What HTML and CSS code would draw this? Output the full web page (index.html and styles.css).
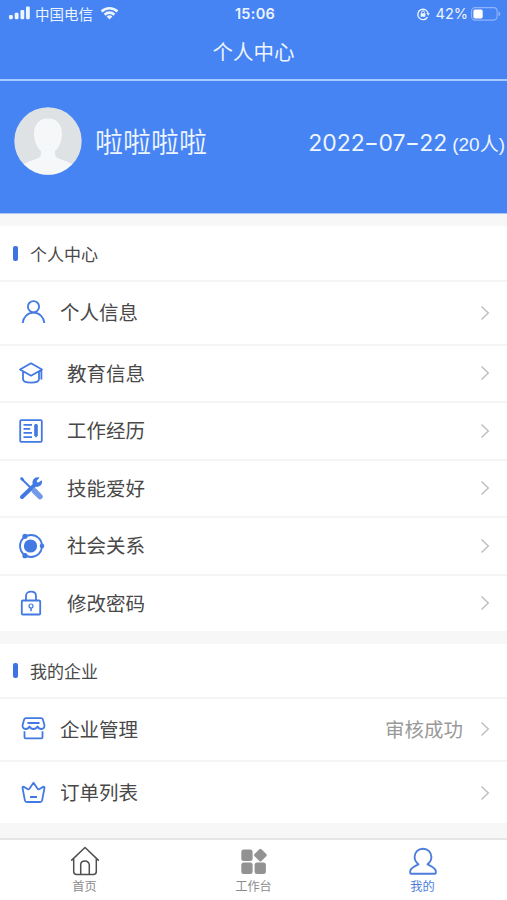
FILE: index.html
```html
<!DOCTYPE html>
<html lang="zh-CN">
<head>
<meta charset="utf-8">
<meta name="viewport" content="width=device-width, initial-scale=1">
<title>个人中心</title>
<link rel="stylesheet" href="styles.css">
</head>
<body>
<svg width="0" height="0" class="defs" aria-hidden="true">
  <symbol id="chevron" viewBox="0 0 10 16"><path d="M1.5 1.5 8.3 8l-6.8 6.5"/></symbol>
</svg>
<header class="top">
  <div class="status">
    <div class="status-left">
      <svg class="signal" viewBox="0 0 22 14" fill="currentColor"><rect y="9" width="4" height="4.500" rx="1.200"/><rect x="6" y="6.800" width="4" height="6.700" rx="1.200"/><rect x="12" y="3.800" width="4" height="9.700" rx="1.200"/><rect x="17.800" y=".3" width="4" height="13.200" rx="1.200"/></svg>
      <span>中国电信</span>
      <svg class="wifi" viewBox="0 0 20 15" fill="none" stroke="currentColor" stroke-width="2.900"><path d="M1.500 5.800a12.400 12.400 0 0 1 17 0M4.800 9.300a7.500 7.500 0 0 1 10.400 0"/><path d="M6.900 11.200a4.700 4.700 0 0 1 6.200 0L10 14.500z" fill="currentColor" stroke="none"/></svg>
    </div>
    <div class="clock">15:06</div>
    <div class="status-right">
      <svg class="rotation" viewBox="0 0 14 14" fill="none" stroke="currentColor" stroke-width="1.400"><path d="M11.500 10.100A5.200 5.200 0 1 1 12.200 7"/><path d="m10.300 6.300 3.500-.1-1.600 2.500z" fill="currentColor" stroke="none"/><rect x="4.600" y="6.200" width="4.800" height="3.600" rx=".6" fill="currentColor" stroke="none"/><path d="M5.600 6.500V5.300a1.400 1.400 0 0 1 2.800 0v1.200" stroke-width="1"/></svg>
      <span>42%</span>
      <svg class="battery" viewBox="0 0 30 14"><rect x=".6" y=".6" width="25.500" height="12.500" rx="3.500" fill="none" stroke="#8fb4fa" stroke-width="1.100"/><rect x="2.400" y="2.400" width="9.300" height="9" rx="1.600" fill="#fff"/><path d="M27.500 4.500c2.400.8 2.400 4 0 4.800z" fill="#8fb4fa"/></svg>
    </div>
  </div>
  <h1>个人中心</h1>
</header>
<section class="profile">
  <svg class="avatar" viewBox="0 0 68 68"><defs><clipPath id="disc"><circle cx="34" cy="34" r="33.700"/></clipPath></defs><g clip-path="url(#disc)"><path fill="#dfe2e4" d="M0 0h68v68H0z"/><path fill="#f5f7f9" d="M34 11.500c8.500 0 14 6 14 15 0 8-2.800 13.500-7 17.500-.5 5 1 6.500 5 8 5.500 2 10 3.500 13 6V68H9V58c3-2.500 7.500-4 13-6 4-1.500 5.500-3 5-8-4.200-4-7-9.500-7-17.500 0-9 5.500-15 14-15z"/></g></svg>
  <div class="name">啦啦啦啦</div>
  <div class="expiry"><span class="date">2022<span class="dash">-</span>07<span class="dash">-</span>22</span><span class="people">(20人)</span></div>
</section>
<main>
  <section class="group">
    <h2>个人中心</h2>
    <a class="row wide"><svg class="icon" viewBox="0 0 24 24"><circle cx="11.500" cy="5.700" r="5.600"/><path d="M.7 22C1.300 16 5.500 11.700 11.500 11.700S21.700 16 22.300 22"/></svg><span>个人信息</span><svg class="chevron"><use href="#chevron"/></svg></a>
    <a class="row"><svg class="icon" viewBox="0 0 24 24"><path d="M1 8.500 12 2.300l11 6.200-11 6.200zM4 11v7c0 2.500 3.500 3.700 8 3.700s8-1.200 8-3.700v-7M22.400 9v9.500"/></svg><span>教育信息</span><svg class="chevron"><use href="#chevron"/></svg></a>
    <a class="row"><svg class="icon" viewBox="0 0 24 24"><rect x="1.200" y="1.200" width="21.600" height="21.600" rx="1"/><path d="M4.500 5.800H13M4.500 9.800h6.700M4.500 13.800H13M4.500 18.200h8.500"/><path d="M15.200 6.500c0-2 3.600-2 3.600 0v9.800L17 18.800l-1.800-2.500z" fill="currentColor" stroke="none"/></svg><span>工作经历</span><svg class="chevron"><use href="#chevron"/></svg></a>
    <a class="row"><svg class="icon" viewBox="0 0 24 24"><path d="M3 21 16.500 8.200" stroke-width="4" stroke-linecap="round"/><path d="M20.500 1.500 17.600 5l1.300 1.700 3.900-2.400c.8 2.700-.5 6-3.900 6.400-1.700.4-3-.2-4.100-1.200-1.500-1.500-1.800-3.500-.8-5.300 1-2.300 3.600-3.600 6.500-2.700z" fill="currentColor" stroke="none"/><path d="m2.500 2.700 11.200 11" stroke-width="1.900"/><path d="m1.300 1.800 2-.7 2 2.700-1.500 1.500L1.300 3.600z" fill="currentColor" stroke="none"/><path d="m15.500 15 5.500 5.600" stroke="#7199ea" stroke-width="5.500" stroke-linecap="round"/></svg><span>技能爱好</span><svg class="chevron"><use href="#chevron"/></svg></a>
    <a class="row"><svg class="icon" viewBox="0 0 24 24"><circle cx="12" cy="12" r="11"/><circle cx="11.500" cy="12" r="6.600" fill="currentColor" stroke="none"/><g fill="currentColor" stroke="none"><circle cx="6" cy="2.300" r="2.600"/><circle cx="23" cy="12" r="2.300"/><circle cx="6" cy="21.700" r="2.600"/></g></svg><span>社会关系</span><svg class="chevron"><use href="#chevron"/></svg></a>
    <a class="row"><svg class="icon" viewBox="0 0 24 24"><rect x="2.800" y="9.500" width="18.400" height="14" rx="1"/><path d="M7 9.500V5c0-2.500 1.800-4.300 5-4.300S17 2.500 17 5v4.500"/><circle cx="12" cy="15" r="2" stroke-width="1.200"/><path d="M12 17v3.300" stroke-width="1.500"/></svg><span>修改密码</span><svg class="chevron"><use href="#chevron"/></svg></a>
  </section>
  <section class="group company">
    <h2>我的企业</h2>
    <a class="row wide"><svg class="icon" viewBox="0 0 24 24"><path d="M3.800 1.200h15.400c.8 0 1.300.4 1.600 1.100L22.400 8c.4 2.300-1 4-3 4-1.900 0-3.200-1-3.900-2.500-.8 1.500-2.200 2.500-4 2.500s-3.200-1-4-2.500C6.800 11 5.500 12 3.600 12c-2 0-3.400-1.700-3-4l1.600-5.700c.3-.7.800-1.100 1.600-1.100zM5.500 6h12M2.500 14.200v6c0 .8.4 1.200 1.200 1.200h15.600c.8 0 1.200-.4 1.200-1.200v-6"/></svg><span>企业管理</span><span class="state">审核成功</span><svg class="chevron"><use href="#chevron"/></svg></a>
    <a class="row wide"><svg class="icon" viewBox="0 0 24 24"><path d="m11.500 1.700 4.300 6.300c.4.500.8.500 1.300.2l4.100-2.300c.8-.4 1.500.1 1.300 1l-2.400 12.400c-.2 1.200-.8 1.700-2 1.700H4.900c-1.200 0-1.800-.5-2-1.700L.5 6.900c-.2-.9.500-1.400 1.300-1l4.100 2.300c.5.300.9.300 1.300-.2zM8 16h7"/></svg><span>订单列表</span><svg class="chevron"><use href="#chevron"/></svg></a>
  </section>
</main>
<nav class="tabs">
  <a class="tab home"><svg viewBox="0 0 30 30"><path d="M1.200 14.600 15 1.500l13.800 13.100M3.700 13v12.500c0 2 1 3 3 3h16.600c2 0 3-1 3-3V13M10.700 28.500V19c0-5.200 8.600-5.200 8.600 0v9.500"/></svg><span>首页</span></a>
  <a class="tab work"><svg viewBox="0 0 30 30"><rect x="2.300" y="3.600" width="11.300" height="11.300" rx="2.500"/><rect x="2.300" y="16.600" width="11.300" height="11.300" rx="2.500"/><rect x="15.600" y="16.600" width="11.300" height="11.300" rx="2.500"/><rect x="16.500" y="4.200" width="9.800" height="9.800" rx="1.500" transform="rotate(45 21.400 9.100)"/></svg><span>工作台</span></a>
  <a class="tab mine"><svg viewBox="0 0 30 30"><path d="M15 2.700c5 0 8.400 3.700 8.400 8.400 0 3.200-1.500 5.500-3.900 7.100 2.500 1.800 8.300 3.700 8.300 7v1.600c0 .5-.4.900-.9.900H3.100a.9.900 0 0 1-.9-.9v-1.600c0-3.300 5.800-5.200 8.300-7-2.400-1.600-3.900-3.900-3.900-7.100 0-4.700 3.400-8.400 8.400-8.400z"/></svg><span>我的</span></a>
</nav>
</body>
</html>
```
FILE: styles.css
```css
* { box-sizing: border-box; }
body {
  margin: 0;
  height: 900px;
  display: flex;
  flex-direction: column;
  overflow: hidden;
  background: #f7f7f7;
  color: #484848;
  font-family: "Noto Sans CJK SC", sans-serif;
}
.defs { display: block; flex: none; height: 0; width: 0; }
.top {
  height: 81px;
  flex: none;
  background: #4683f3;
  border-bottom: 2px solid #a9caff;
  color: #edf5ff;
}
.status {
  height: 27px;
  padding: 0 6px 0 9px;
  display: grid;
  grid-template-columns: 1fr auto 1fr;
  align-items: center;
  font-size: 14.5px;
  line-height: 27px;
}
.status-left, .status-right { display: flex; align-items: center; }
.status-left span { margin: 0 7px 0 5px; }
.status-left svg { margin-bottom: 1px; }
.status-right { justify-content: flex-end; font-family: Inter, sans-serif; }
.status-right span { margin: 0 3px 0 6px; }
.signal { width: 21px; height: 14px; }
.wifi { width: 19px; height: 14px; }
.rotation { width: 14px; height: 14px; }
.battery { width: 30px; height: 14px; }
.clock { font: 600 14.5px/27px Inter, sans-serif; letter-spacing: .3px; }
h1 {
  margin: 0;
  text-align: center;
  font-weight: 400;
  font-size: 20.5px;
  line-height: 48px;
}
.profile {
  height: 133px;
  flex: none;
  padding: 0 2px 12px 14px;
  display: flex;
  align-items: center;
  background: #4683f3;
  border-bottom: 1px solid #a9c5f7;
  color: #edf5ff;
}
.avatar { width: 68px; height: 68px; margin-bottom: 1px; }
.name { margin-left: 13px; font-size: 28px; font-weight: 350; }
.expiry { margin: 5px 0 0 auto; display: flex; align-items: baseline; white-space: nowrap; }
.date { font: 400 23px/32px Inter, sans-serif; }
.dash { display: inline-block; margin: 0 1.5px; transform: scaleX(1.4); }
.people { margin-left: 5px; font: 400 19px/32px "Liberation Sans", "Noto Sans CJK SC", sans-serif; }
.group { margin-top: 12px; background: #fff; }
.company { margin-top: 13px; }
h2 {
  margin: 0;
  height: 56px;
  padding-left: 13px;
  display: flex;
  align-items: center;
  gap: 12px;
  border-bottom: 2px solid #f5f5f5;
  font-size: 17px;
  font-weight: 400;
}
h2::before {
  content: "";
  width: 5px;
  height: 15px;
  border-radius: 2px;
  background: #3f72e3;
}
.company h2 { height: 55px; }
.row {
  height: 57.5px;
  padding: 0 17px 0 19px;
  display: flex;
  align-items: center;
  border-bottom: 2px solid #f5f5f5;
  font-size: 19.5px;
}
.row > span { padding-bottom: 2px; }
.row.wide { height: 63.5px; padding-left: 22px; }
.row:last-child { border-bottom: 0; }
.group:first-child .row:last-child { height: 55px; }
.company .row:last-child { height: 61px; }
.icon {
  width: 24px;
  height: 24px;
  margin-right: 24px;
  overflow: visible;
  color: #4279e2;
  fill: none;
  stroke: currentColor;
  stroke-width: 1.8;
  stroke-linejoin: round;
}
.wide .icon { margin-right: 14px; }
.chevron {
  width: 10px;
  height: 16px;
  margin-left: auto;
  fill: none;
  stroke: #bdbdbd;
  stroke-width: 1.4;
}
.state { margin-left: auto; color: #999; }
.state + .chevron { margin-left: 17px; }
.tabs {
  height: 62px;
  margin-top: auto;
  flex: none;
  display: grid;
  grid-template-columns: repeat(3, 1fr);
  background: #fff;
  border-top: 2px solid #e6e6e6;
}
.tab {
  padding-top: 6px;
  display: flex;
  flex-direction: column;
  align-items: center;
  color: #8c8c8c;
  font-size: 12.2px;
  line-height: 20px;
}
.tab svg { width: 30px; height: 30px; fill: none; stroke-width: 1.5; stroke-linejoin: round; }
.tab.home svg { stroke: #4f4f4f; }
.tab.work svg { fill: #929292; }
.tab.mine { color: #4d7edb; }
.tab.mine svg { stroke: #4d7edb; stroke-width: 1.9; }
```
